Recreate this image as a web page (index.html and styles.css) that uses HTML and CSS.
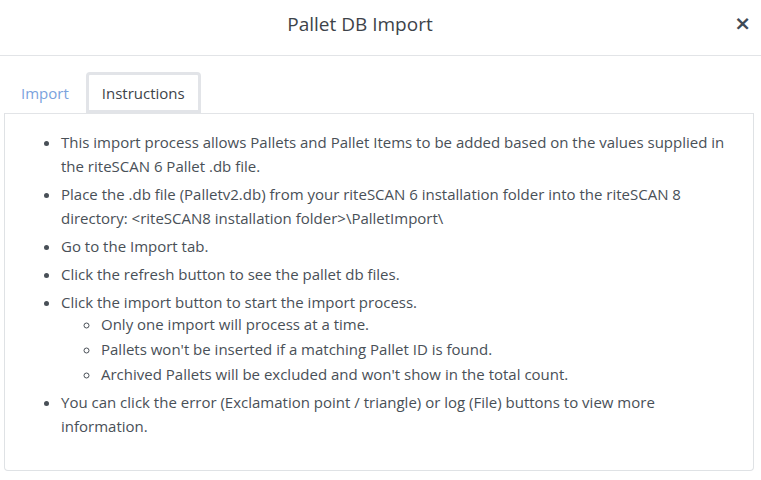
FILE: index.html
```html
<!DOCTYPE html>
<html lang="en">
<head>
<meta charset="utf-8">
<title>Pallet DB Import</title>
<link rel="stylesheet" href="styles.css">
</head>
<body>
<div class="modal">
  <header class="modal-header">
    <h5 class="modal-title">Pallet DB Import</h5>
    <button class="close" type="button" aria-label="Close">×</button>
  </header>
  <div class="modal-body">
    <nav class="tabs">
      <a class="tab-link" href="#">Import</a>
      <a class="tab-link active" href="#">Instructions</a>
    </nav>
    <div class="tab-panel">
      <ul class="steps">
        <li>This import process allows Pallets and Pallet Items to be added based on the values supplied in the riteSCAN 6 Pallet .db file.</li>
        <li>Place the .db file (Palletv2.db) from your riteSCAN 6 installation folder into the riteSCAN 8 directory: &lt;riteSCAN8 installation folder&gt;\PalletImport\</li>
        <li>Go to the Import tab.</li>
        <li>Click the refresh button to see the pallet db files.</li>
        <li>Click the import button to start the import process.
          <ul class="substeps">
            <li>Only one import will process at a time.</li>
            <li>Pallets won't be inserted if a matching Pallet ID is found.</li>
            <li>Archived Pallets will be excluded and won't show in the total count.</li>
          </ul>
        </li>
        <li>You can click the error (Exclamation point / triangle) or log (File) buttons to view more information.</li>
      </ul>
    </div>
  </div>
</div>
</body>
</html>
```
FILE: styles.css
```css
* { box-sizing: border-box; }
html, body {
  margin: 0;
  padding: 0;
  background: #fff;
}
body {
  font-family: "Open Sans", "Noto Sans", sans-serif;
  font-size: 15px;
  color: #495057;
}
.modal {
  width: 761px;
  height: 480px;
  background: #fff;
}
.modal-header {
  height: 56px;
  border-bottom: 1px solid #e2e4e7;
  display: flex;
  align-items: center;
  padding: 0 0 0 0;
}
.modal-title {
  flex: 1;
  text-align: center;
  margin: 0;
  font-size: 19px;
  font-weight: 400;
  color: #3d4349;
  line-height: 1;
  padding-bottom: 6px;
}
.close {
  width: 41px;
  flex: none;
  align-self: flex-start;
  margin-top: 13px;
  border: 0;
  background: none;
  padding: 0 10px 0 0;
  text-align: right;
  font-family: "DejaVu Sans", sans-serif;
  font-size: 20px;
  font-weight: 700;
  line-height: 20px;
  color: #3f4a56;
  cursor: pointer;
}
.modal-body {
  padding: 16px 7px 0 4px;
}
.tabs {
  display: flex;
  align-items: flex-end;
  height: 41px;
}
.tab-link {
  display: block;
  text-decoration: none;
  color: #7aa2dd;
  line-height: 22px;
  padding: 10px 17px 9px 17px;
}
.tab-link.active {
  color: #3d4349;
  border: 3px solid #e2e4e8;
  border-radius: 4px 4px 0 0;
  padding: 7px 13px 6px 13px;
  height: 41px;
}
.tab-panel {
  border: 1px solid #dfe2e5;
  border-top-color: #e2e4e7;
  border-radius: 0 0 4px 4px;
  height: 358px;
  padding: 16px 16px 16px 16px;
}
.steps {
  margin: 0;
  padding-left: 40px;
  line-height: 24px;
}
.steps > li {
  margin-bottom: 4px;
}
.substeps {
  margin: -2px 0 0 0;
  padding-left: 40px;
  list-style-type: circle;
}
.substeps > li {
  margin: 0;
}
.substeps > li + li {
  margin-top: 1px;
}
```
